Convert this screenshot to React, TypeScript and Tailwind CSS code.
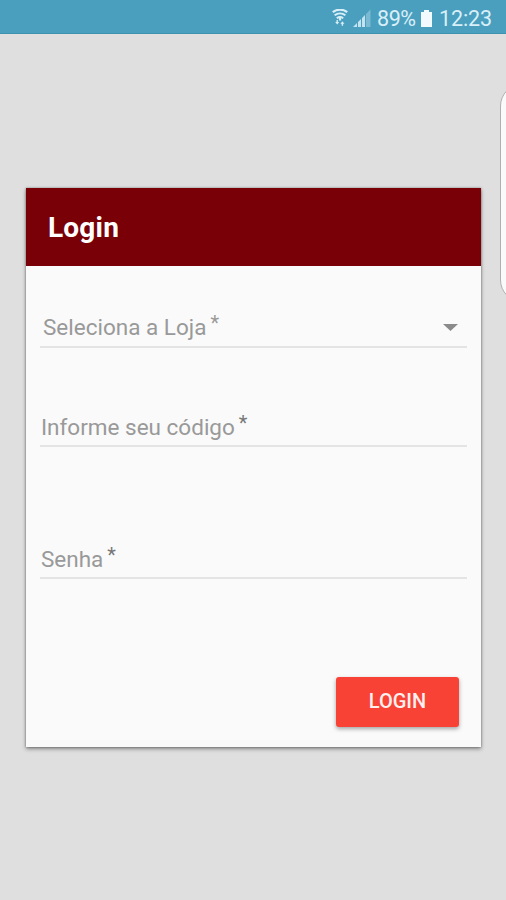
import React from "react";

function StatusBar() {
  return (
    <header className="flex h-[34px] items-start border-b border-[#3d93b0] bg-[#4a9fbf] pl-[332px] text-[#d9eff8]">
      <svg className="mt-[9px] h-[18px] w-4 shrink-0" viewBox="0 0 16 18" fill="none" stroke="currentColor">
        <path d="M0.8 3.2C5 -.2 11 -.2 15.2 3.2" strokeWidth="2.2" />
        <path d="M2.600 6.3c3.200-2.4 7.600-2.4 10.800 0M4.800 9.200c2-1.500 4.400-1.500 6.400 0" strokeWidth="2" />
        <path d="M8 8.5V11.500" strokeWidth="2.2" />
        <path d="M3.2 13 5.2 15.500l2-2.500ZM8.400 14.8l2-2.500 2 2.500Z" fill="currentColor" stroke="none" />
        <path d="M5.2 11v2.5M10.4 14v2.8" strokeWidth="1.4" />
      </svg>
      <svg className="ml-[5px] mt-[9px] h-[18px] w-[18px] shrink-0" viewBox="0 0 18 18" fill="currentColor">
        <path d="M0 18 4 14v4ZM5 13l3-3v8H5ZM9 9l3-3v12H9Z" opacity=".85" />
        <path d="M13 5 17.500 .5V18H13Z" opacity=".35" />
      </svg>
      <span className="ml-[6px] mt-[5px] w-[40px] whitespace-nowrap text-[21.5px] leading-[27px] tracking-[-0.4px]">89%</span>
      <svg className="ml-[4px] mt-[10px] h-[17px] w-[11px] shrink-0" viewBox="0 0 11 17" fill="#f3fafd">
        <path d="M3 0h5v2h3v15H0V2h3Z" />
      </svg>
      <span className="ml-[7px] mt-[5px] whitespace-nowrap text-[21.5px] leading-[27px] tracking-[-0.1px]">12:23</span>
    </header>
  );
}

interface FieldProps {
  label: string;
  className: string;
  labelClass: string;
  starClass: string;
  select?: boolean;
}

function Field({ label, className, labelClass, starClass, select }: FieldProps) {
  return (
    <div className={`flex items-start justify-between border-b-2 border-[#e4e4e4] ${className}`}>
      <div className="flex whitespace-nowrap">
        <span className={`text-[22.5px] leading-[30px] text-[#999999] ${labelClass}`}>{label}</span>
        <span className={`text-[20px] leading-[22px] ${starClass}`}>*</span>
      </div>
      {select && (
        <svg className="mr-[9px] mt-[12px] h-[7px] w-[15px]" viewBox="0 0 15 7" fill="#8b8b8b">
          <path d="M0 0h15L7.500 7Z" />
        </svg>
      )}
    </div>
  );
}

export default function App() {
  return (
    <main className="relative flex h-[900px] w-[506px] flex-col overflow-hidden bg-[#dfdfdf] font-[Roboto,sans-serif]">
      <StatusBar />
      <section className="ml-[26px] mt-[154px] flex h-[559px] w-[455px] flex-col bg-[#fafafa] shadow-[0_2px_4px_rgba(0,0,0,0.4),0_0_2px_rgba(0,0,0,0.35)]">
        <div className="flex h-[78px] items-center bg-[#790006] pl-[22px] pt-[1px] text-[28px] font-bold tracking-[0.2px] text-white">
          Login
        </div>
        <form className="flex flex-col px-[14px]">
          <Field label="Seleciona a Loja" className="mt-[46px] h-[36px]" labelClass="ml-[3px]" starClass="ml-[4px] text-[#999999]" select />
          <Field label="Informe seu código" className="mt-[63px] h-[36px]" labelClass="ml-[1px] mt-[1px]" starClass="ml-[4px] mt-[1px] text-[#777777]" />
          <Field label="Senha" className="mt-[96px] h-[36px]" labelClass="ml-[1px] mt-[1px]" starClass="ml-[4px] mt-[1px] text-[#777777]" />
          <button type="button" className="mr-[8px] mt-[98px] h-[50px] w-[123px] self-end rounded-[3px] bg-[#f84236] pb-[2px] text-[20px] font-medium text-[#fff0ef] shadow-[0_2px_4px_rgba(0,0,0,0.35)]">
            LOGIN
          </button>
        </form>
      </section>
      <div className="absolute left-[500px] top-[84px] h-[218px] w-[60px] rounded-[22px] border border-[#b0b0b0] bg-[#fafafa]" />
    </main>
  );
}
